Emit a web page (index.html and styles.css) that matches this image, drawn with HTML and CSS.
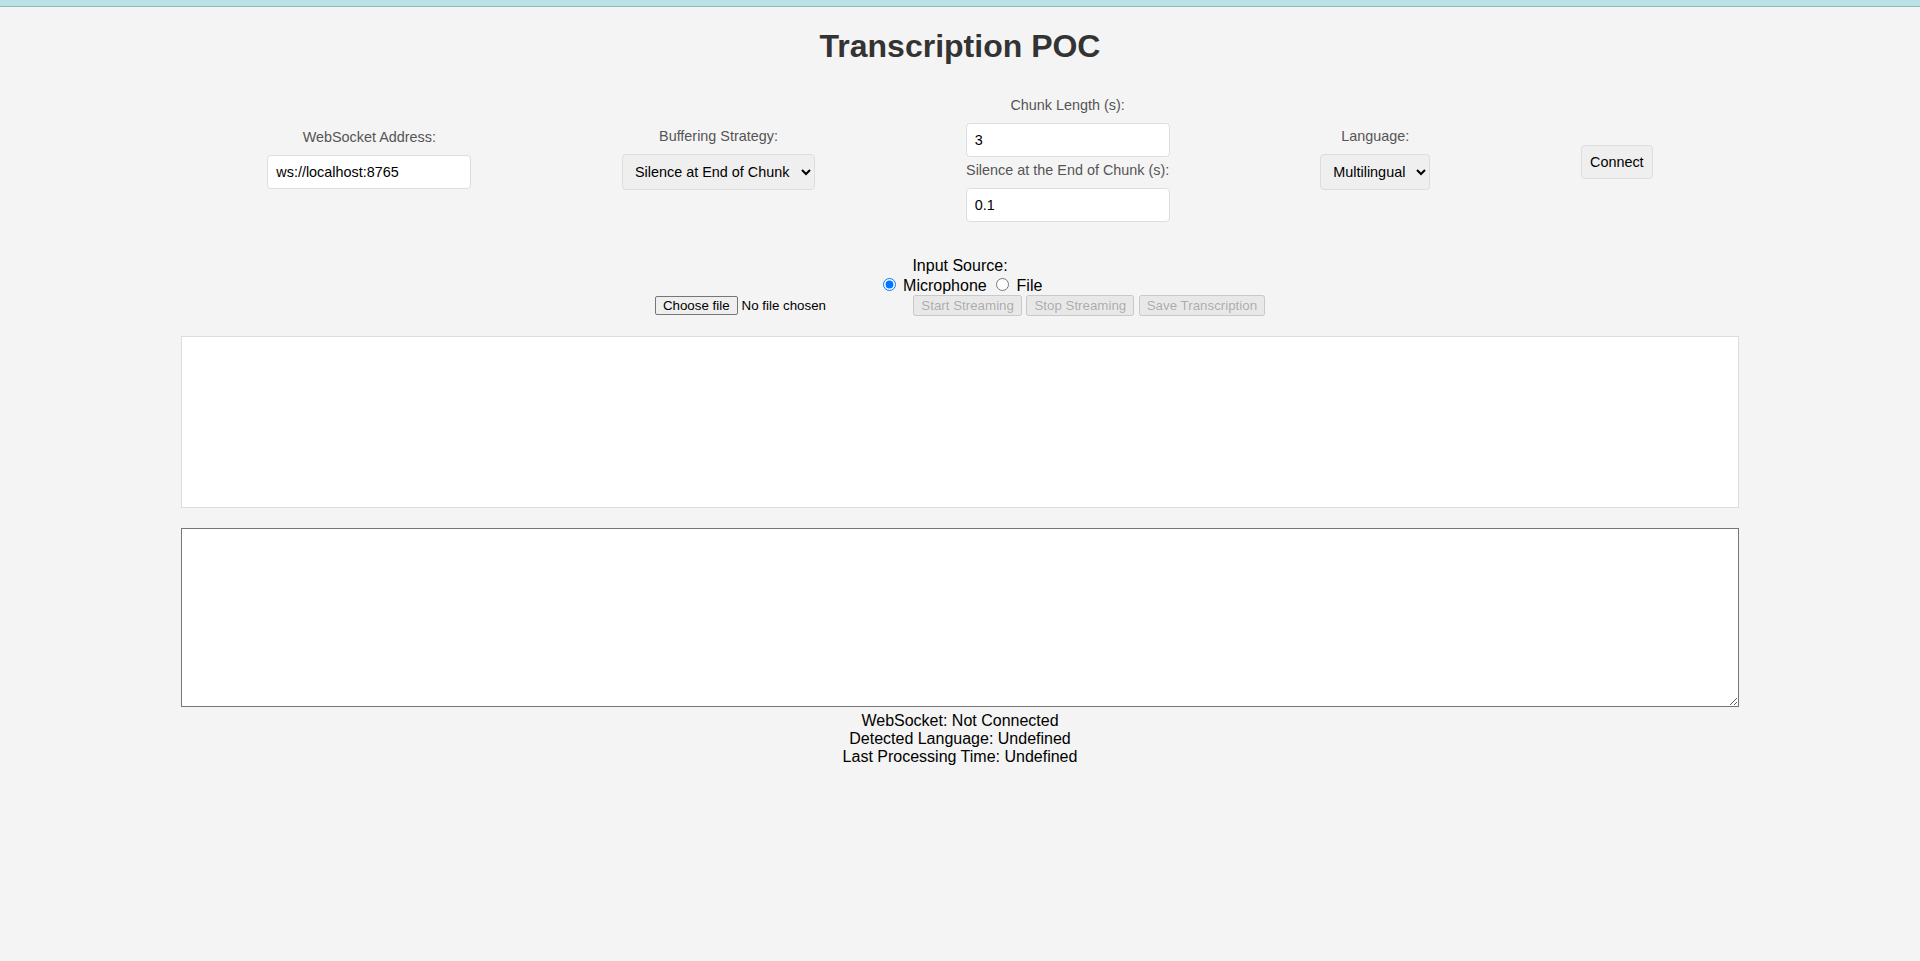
FILE: index.html
```html
<!DOCTYPE html>
<html lang="en">
<head>
<meta charset="utf-8">
<title>Transcription POC</title>
<link rel="stylesheet" href="styles.css">
</head>
<body>
<div class="topbar"></div>
<h1 class="title">Transcription POC</h1>

<div class="controls">
  <div class="field">
    <label class="field-label" for="ws-address">WebSocket Address:</label>
    <input id="ws-address" class="text-input" type="text" value="ws://localhost:8765">
  </div>
  <div class="field">
    <label class="field-label" for="buffering">Buffering Strategy:</label>
    <select id="buffering" class="select-input">
      <option>Silence at End of Chunk</option>
    </select>
  </div>
  <div class="field">
    <label class="field-label" for="chunk-length">Chunk Length (s):</label>
    <input id="chunk-length" class="text-input" type="text" value="3">
    <label class="field-label" for="chunk-silence">Silence at the End of Chunk (s):</label>
    <input id="chunk-silence" class="text-input" type="text" value="0.1">
  </div>
  <div class="field">
    <label class="field-label" for="language">Language:</label>
    <select id="language" class="select-input">
      <option>Multilingual</option>
    </select>
  </div>
  <button class="connect-btn" type="button">Connect</button>
</div>

<div class="source">
  <div class="source-label">Input Source:</div>
  <div class="source-options">
    <input type="radio" name="source" id="src-mic" class="source-radio" checked> <label for="src-mic">Microphone</label>
    <input type="radio" name="source" id="src-file" class="source-radio"> <label for="src-file">File</label>
  </div>
  <div class="source-actions">
    <label class="file-picker"><input type="file" class="file-input"><span class="file-btn">Choose file</span><span class="file-name">No file chosen</span></label>
    <button class="action-btn" type="button" disabled>Start Streaming</button>
    <button class="action-btn" type="button" disabled>Stop Streaming</button>
    <button class="action-btn" type="button" disabled>Save Transcription</button>
  </div>
</div>

<div class="transcript"></div>

<textarea class="log"></textarea>

<div class="status">
  <div>WebSocket: Not Connected</div>
  <div>Detected Language: Undefined</div>
  <div>Last Processing Time: Undefined</div>
</div>
</body>
</html>
```
FILE: styles.css
```css
html, body {
  margin: 0;
  padding: 0;
}

body {
  background-color: #f4f4f4;
  font-family: "Liberation Sans", Arial, sans-serif;
  font-size: 16px;
  color: #000;
}

.topbar {
  height: 6px;
  background-color: #b8e2e6;
  border-bottom: 1px solid #93b6b9;
}

.title {
  text-align: center;
  color: #333;
  font-size: 32px;
  font-weight: bold;
  margin: 21.44px 0;
}

.controls {
  width: 80%;
  margin: 0 auto 20px;
  padding: 10px 0;
  display: flex;
  justify-content: space-around;
  align-items: center;
}

.field {
  display: flex;
  flex-direction: column;
  align-items: center;
}

.field-label {
  display: block;
  color: #555;
  font-size: 14.4px;
  margin-bottom: 5px;
  text-align: center;
}

.text-input {
  box-sizing: border-box;
  width: 204px;
  margin: 5px 0;
  padding: 8px;
  border: 1px solid #ddd;
  border-radius: 4px;
  background-color: #fff;
  font-family: "Liberation Sans", Arial, sans-serif;
  font-size: 14.4px;
  color: #000;
}

.select-input {
  margin: 5px 0;
  padding: 8px;
  border: 1px solid #ddd;
  border-radius: 4px;
  background-color: #efefef;
  font-family: "Liberation Sans", Arial, sans-serif;
  font-size: 14.4px;
  color: #000;
}

.connect-btn {
  padding: 8px;
  border: 1px solid #ddd;
  border-radius: 4px;
  background-color: #efefef;
  font-family: "Liberation Sans", Arial, sans-serif;
  font-size: 14.4px;
  color: #000;
}

.source {
  text-align: center;
  margin-bottom: 20px;
}

.file-picker {
  display: inline-block;
  width: 254px;
  text-align: left;
  font-size: 13.333px;
}

.file-input {
  display: none;
}

.file-btn {
  display: inline-block;
  margin-right: 4px;
  padding: 1px 7px;
  border: 1px solid #767676;
  border-radius: 2px;
  background-color: #efefef;
  color: #000;
}

.action-btn {
  font-family: "Liberation Sans", Arial, sans-serif;
  font-size: 13.333px;
}

.transcript {
  width: 80%;
  height: 150px;
  margin: 20px auto;
  padding: 10px;
  border: 1px solid #ddd;
  background-color: #fff;
}

.log {
  display: block;
  width: 80%;
  height: 157px;
  margin: 20px auto 0;
  padding: 10px;
  border: 1px solid #767676;
  background-color: #fff;
}

.status {
  padding-top: 5px;
  text-align: center;
}
```
